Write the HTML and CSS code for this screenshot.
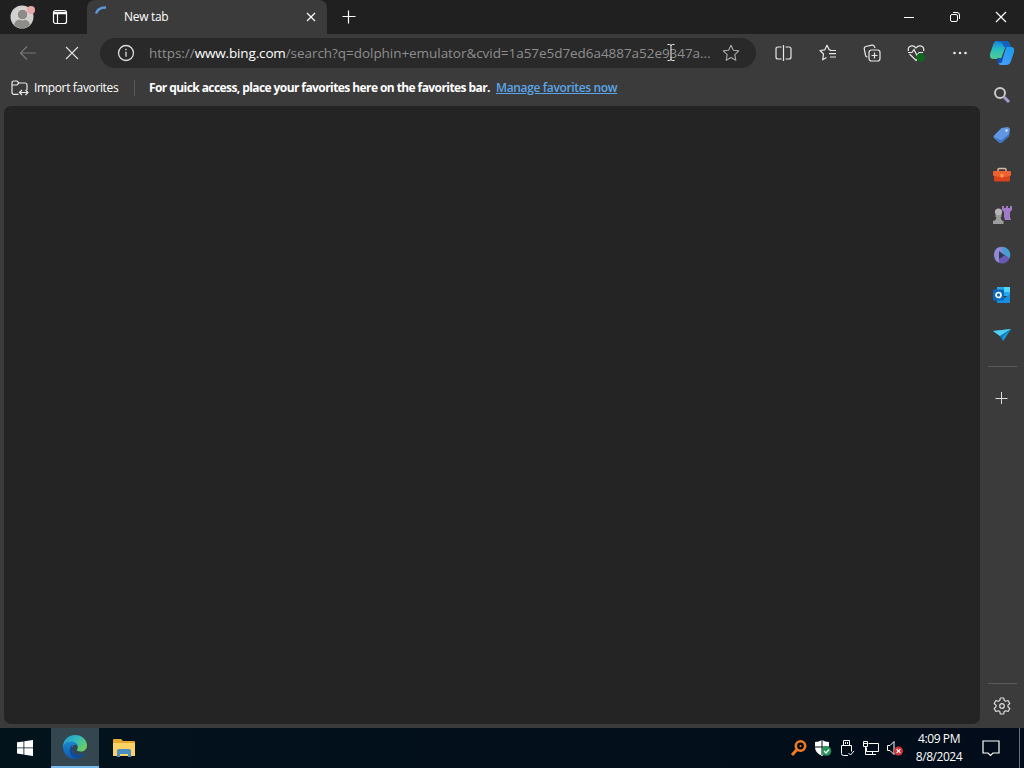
FILE: index.html
```html
<!DOCTYPE html>
<html lang="en">
<head>
  <meta charset="utf-8">
  <title>New tab</title>
  <link rel="stylesheet" href="styles.css">
</head>
<body>

  <!-- Tab strip -->
  <div class="titlebar">
    <svg class="avatar" width="28" height="28" viewBox="0 0 28 28">
      <circle cx="14" cy="14" r="11.5" fill="#d2d0ce"/>
      <path d="M6 22a8 6 0 0 1 16 0a11.5 11.5 0 0 1-16 0z" fill="#8e8c89"/>
      <circle cx="14.5" cy="11.5" r="5.4" fill="#8e8c89" stroke="#e8e6e4"/>
      <circle cx="23" cy="7" r="4" fill="#e9a8a8"/>
    </svg>
    <svg class="workspaces" width="16" height="16" viewBox="0 0 16 16" fill="none" stroke="#fff" stroke-width="1.2">
      <rect x="1.5" y="1.5" width="13" height="13" rx="2"/>
      <path d="M2 3.4h12M2 4.6h12M5.5 5v9"/>
    </svg>
    <div class="tab">
      <svg class="spinner" width="16" height="16" viewBox="0 0 16 16" fill="none">
        <path d="M2 8.500Q4 2.300 12 2.500" stroke="#5b9bdc" stroke-width="2.400"/>
      </svg>
      <span class="tab-title">New tab</span>
      <svg width="10" height="10" viewBox="0 0 10 10" stroke="#fff" stroke-width="1.2"><path d="M1 1l8 8M9 1l-8 8"/></svg>
    </div>
    <svg class="new-tab" width="14" height="14" viewBox="0 0 14 14" stroke="#fff" stroke-width="1.2"><path d="M6.500 .5v13M.5 6.500h13"/></svg>
    <div class="window-buttons">
      <svg width="12" height="12" viewBox="0 0 12 12" stroke="#fff"><path d="M1 6.5h10"/></svg>
      <svg width="12" height="12" viewBox="0 0 12 12" fill="none" stroke="#fff"><rect x="1.5" y="3.5" width="7" height="7" rx="1.5"/><path d="M4 1.5h4q2.5 0 2.5 2.5v4"/></svg>
      <svg width="12" height="12" viewBox="0 0 12 12" stroke="#fff" stroke-width="1.2"><path d="M1 1l10 10M11 1L1 11"/></svg>
    </div>
  </div>

  <div class="browser">
    <div class="main">

      <!-- Toolbar -->
      <div class="toolbar">
        <svg class="back" width="18" height="16" viewBox="0 0 18 16" fill="none" stroke="#777" stroke-width="1.2"><path d="M17 8H1.5M8 1.5L1.5 8L8 14.5"/></svg>
        <svg class="stop" width="14" height="14" viewBox="0 0 14 14" stroke="#ddd" stroke-width="1.2"><path d="M1 1l12 12M13 1L1 13"/></svg>
        <div class="address">
          <svg class="info" width="18" height="18" viewBox="0 0 18 18" fill="none" stroke="#ddd" stroke-width="1.3"><circle cx="9" cy="9" r="7.5"/><path d="M9 7.8v5M9 4.8v1.5"/></svg>
          <span class="url">https://<b>www.bing.com</b>/search?q=dolphin+emulator&amp;cvid=1a57e5d7ed6a4887a52e9347a...</span>
          <svg class="star" width="18" height="18" viewBox="0 0 18 18" fill="none" stroke="#aaa" stroke-width="1.1" stroke-linejoin="round"><path d="M9 1.2l2.4 5 5.4.7-4 3.8 1 5.5L9 13.6l-4.8 2.6 1-5.5-4-3.8 5.4-.7z"/></svg>
          <svg class="cursor" width="8" height="17" viewBox="0 0 8 17" fill="none" stroke="#eee"><path d="M.5.5h2Q4 .5 4 2Q4 .5 5.500.5h2M4 2v13M.5 16.500h2Q4 16.500 4 15Q4 16.500 5.500 16.500h2"/></svg>
        </div>
        <div class="tools">
          <svg width="18" height="18" viewBox="0 0 18 18" fill="none" stroke="#e8e8e8" stroke-width="1.2"><path d="M8.500 1v16M6.500 3H3Q1 3 1 5v8q0 2 2 2h3.500M10.500 3H14q2 0 2 2v8q0 2-2 2h-3.500"/></svg>
          <svg width="18" height="18" viewBox="0 0 18 18" fill="none" stroke="#e8e8e8" stroke-width="1.2" stroke-linejoin="round"><path d="M12 6l-1.800-.2L8 1.300 5.800 5.800 1 6.500l3.500 3.500-.8 5.800L7.500 13.500M11 6.500h6M10 9.700h7M11 13h6"/></svg>
          <svg width="18" height="18" viewBox="0 0 18 18" fill="none" stroke="#e8e8e8" stroke-width="1.200"><rect x="6" y="6" width="11" height="11" rx="2.500"/><path d="M11.500 8.500v6M8.500 11.500h6M4.500 13Q3 13 2.600 11.500L1.200 5Q1 3 2.700 2.500L9 1.200q2-.2 2.500 1.500L12 4"/></svg>
          <svg width="18" height="18" viewBox="0 0 18 18" fill="none" stroke="#e8e8e8" stroke-width="1.200"><path d="M1.500 7C0 2 6 0 9 4C12 0 18 2 16.500 7M2.500 10L9 16.500L14 11.500M1 8.500h4l2-3 3 6 2-3h4"/><circle cx="13.500" cy="13.500" r="4.200" fill="#0d681b" stroke="none"/></svg>
          <svg width="18" height="18" viewBox="0 0 18 18" fill="#e8e8e8"><circle cx="3.500" cy="9" r="1.300"/><circle cx="9" cy="9" r="1.300"/><circle cx="14.500" cy="9" r="1.300"/></svg>
        </div>
      </div>

      <!-- Favorites bar -->
      <div class="favorites">
        <svg width="18" height="16" viewBox="0 0 18 16" fill="none" stroke="#e8e8e8" stroke-width="1.200"><path d="M7.500 14.400H3q-2 0-2-2V3q0-2 2-2h3l2 2h6q2 0 2 2v5M1 5h5l2-2M9 12.500h7.500M11 10l-2.500 2.500L11 15M14.500 10l2.500 2.500-2.500 2.500"/></svg>
        <span class="import">Import favorites</span>
        <span class="divider"></span>
        <span class="hint">For quick access, place your favorites here on the favorites bar.</span>
        <a href="#" class="manage">Manage favorites now</a>
      </div>

      <div class="page"></div>
    </div>

    <!-- Sidebar -->
    <div class="sidebar">
      <svg class="copilot" width="26" height="26" viewBox="0 0 26 26">
        <defs>
          <linearGradient id="cp1" x1="0" y1="0" x2="0" y2="1"><stop offset="0" stop-color="#1682dd"/><stop offset=".5" stop-color="#29c0bd"/><stop offset="1" stop-color="#50cd8d"/></linearGradient>
          <linearGradient id="cp2" x1="1" y1="0" x2="0" y2="1"><stop offset="0" stop-color="#159ce9"/><stop offset="1" stop-color="#4d9dff"/></linearGradient>
        </defs>
        <path d="M8 1h9q3 0 4 4l1 3h-6l-4 11H5q-5 0-4-5L4 5q1-4 4-4z" fill="url(#cp1)"/>
        <path d="M8 1h9q3 0 4 4l1 3h-5q-2 0-3-3t-4-3z" fill="#1262bd"/>
        <path d="M18 7h4q4 0 3 5l-3 9q-1 4-5 4h-5q-3 0-3-4h2q2 0 3-4l2-6q1-4 2-4z" fill="url(#cp2)"/>
        <path d="M8 18h4q2-1 3-4l-2 8q-2 2-4 1-1-1-1-5z" fill="#1551ae"/>
      </svg>
      <svg width="18" height="18" viewBox="0 0 18 18" fill="none"><circle cx="7" cy="7" r="5" stroke="#c9c9c9" stroke-width="2"/><path d="M11 11l5 5" stroke="#a59bd0" stroke-width="3"/></svg>
      <svg width="18" height="18" viewBox="0 0 18 18"><path d="M1 9.500L8.500 2 15 1l2 2-1 7-7 6.500q-2 1-3.500-.5L1 12q-1-1 0-2.500z" fill="#6097e2"/><path d="M1 11l6 5.700q1.500.5 2.500-.5L16 10l.3-2L8 14.500z" fill="#3971c2"/><circle cx="13.500" cy="4.500" r="1.200" fill="#d2e3fa"/></svg>
      <svg width="20" height="18" viewBox="0 0 20 18"><path d="M6 5V3.500q0-1 1-1h6q1 0 1 1V5" fill="none" stroke="#d9b9a0" stroke-width="1.400"/><path d="M2 9h16v5q0 1.500-1.500 1.500h-13Q2 15.500 2 14z" fill="#d9431b"/><path d="M1 6q0-1 1-1h16q1 0 1 1v3.500q-9 3-18 0z" fill="#ee6030"/><path d="M8.500 8h3v2.500L10 12l-1.500-1.500z" fill="#ff9a4d"/></svg>
      <svg width="20" height="18" viewBox="0 0 20 18"><path d="M10 0h2v2h2V0h2v2h2V0h2v4l-2 2v5l1 3h-6l-1-3V6l-2-2z" fill="#a07bc8"/><circle cx="6.500" cy="6" r="3.600" fill="#b5b5b5"/><path d="M3.500 9h6v2h-1l1 3 2 1v3H1v-3l2.500-1 1-3h-1z" fill="#9c9c9c"/></svg>
      <svg width="18" height="18" viewBox="0 0 18 18">
        <path d="M9 .7A8.300 8.300 0 0 1 16.500 12.500L11 9 6 5z" fill="#459fd3"/>
        <path d="M9 .7Q2 .5 1 8q-.5 6 5 9V5l6 3.500Q8 3 9 .7z" fill="#9188d6"/>
        <path d="M6 17q7 2 10.500-4.500L12 9l-6 4z" fill="#6859b6"/>
        <path d="M6 5.500l5.500 3.500L6 12.500z" fill="#303a55"/>
      </svg>
      <svg width="18" height="18" viewBox="0 0 18 18"><path d="M4 1h12q1 0 1 1v8H4z" fill="#28a8ea"/><path d="M11 1h6v5h-6z" fill="#50d9ff"/><path d="M4 9l6 4 7-5v8q0 1-1 1H4z" fill="#1490df"/><rect y="3.500" width="11" height="11" rx="1" fill="#0a68bd"/><circle cx="5.500" cy="9" r="2.500" fill="none" stroke="#fff" stroke-width="1.700"/></svg>
      <svg width="18" height="18" viewBox="0 0 18 18"><path d="M0 5l18-2-8 12-3-5z" fill="#1ba4df"/><path d="M0 5l18-2L7 10z" fill="#54cdf2"/><path d="M7 10l11-7-8 8v4z" fill="#087eb7"/></svg>
      <div class="rule"></div>
      <svg class="add" width="14" height="14" viewBox="0 0 14 14" stroke="#ddd"><path d="M6.500 1v12M.5 7.500h12"/></svg>
      <div class="rule rule-bottom"></div>
      <svg class="gear" width="18" height="18" viewBox="0 0 18 18" fill="none" stroke="#ddd" stroke-width="1.200" stroke-linejoin="round"><path d="M7.300 1h3.400l.5 2.400 1.600.9 2.300-.8 1.700 3L15 8.100v1.800l1.800 1.600-1.700 3-2.300-.8-1.600.9-.5 2.400H7.300l-.5-2.400-1.600-.9-2.300.8-1.700-3L3 9.900V8.100L1.200 6.500l1.700-3 2.300.8 1.600-.9z"/><circle cx="9" cy="9" r="2.300"/></svg>
    </div>
  </div>

  <!-- Windows taskbar -->
  <div class="taskbar">
    <div class="task">
      <svg width="16" height="16" viewBox="0 0 16 16" fill="#fff"><path d="M0 2.300l6.500-.9v6.100H0zM7.300 1.300L16 0v7.500H7.300zM0 8.300h6.500v6.200L0 13.600zM7.300 8.300H16V16l-8.700-1.300z"/></svg>
    </div>
    <div class="task active">
      <svg width="24" height="24" viewBox="0 0 24 24">
        <defs>
          <linearGradient id="edge1" x1="0" y1="0" x2="1" y2=".6"><stop offset="0" stop-color="#2298d4"/><stop offset=".5" stop-color="#32b7c1"/><stop offset="1" stop-color="#68ce62"/></linearGradient>
          <linearGradient id="edge2" x1="0" y1="0" x2="0" y2="1"><stop offset="0" stop-color="#1b86cc"/><stop offset="1" stop-color="#1058b4"/></linearGradient>
        </defs>
        <path d="M0 12C0 5 5 0 12 0c7 0 12 5 12 10.500 0 4-3 6-6.500 6-2.500 0-4-1-3.500-2 2-3 0-6-4-6-5 0-8 2-10 3.500z" fill="url(#edge1)"/>
        <path d="M0 12c1-4 4-6 8-5.500 4 0 6 2 7 4-3-2-6 0-6 3 0 5 6 8 13 5-2 3.500-6 5.500-10 5.500C5 24 0 18 0 12z" fill="url(#edge2)"/>
        <path d="M9 10c-5 5-1 13 5 13.700 4-.7 6-2.200 8-5.200-7 3-13 0-13-5z" fill="#124b91"/>
      </svg>
    </div>
    <div class="task">
      <svg width="22" height="20" viewBox="0 0 22 20"><path d="M0 2q0-1 1-1h7l2 2h11q1 0 1 1v14H0z" fill="#e8a92f"/><path d="M0 5h22v13H0z" fill="#fbd264"/><path d="M4 19v-6q0-2 2-2h10q2 0 2 2v6h-3v-3H7v3z" fill="#4b8ec4"/></svg>
    </div>
    <div class="tray">
      <svg width="18" height="18" viewBox="0 0 18 18" fill="none" stroke="#f07b22"><circle cx="10.500" cy="7" r="4.700" stroke-width="2.600"/><circle cx="10.500" cy="7" r="1" stroke="none" fill="#f07b22"/><path d="M7 10.500L2 16" stroke-width="3"/></svg>
      <svg width="18" height="18" viewBox="0 0 18 18"><path d="M8 1q3 2 7 2v5q0 6-7 9Q1 14 1 8V3q4 0 7-2z" fill="#fff"/><path d="M8 1v15M1 8h14" stroke="#020d19"/><circle cx="12.500" cy="12" r="4.800" fill="#249458"/><path d="M10 12l2 2 3-3.500" fill="none" stroke="#fff" stroke-width="1.200"/></svg>
      <svg width="18" height="18" viewBox="0 0 18 18" fill="none" stroke="#fff"><path d="M5.500 6.500v-5h6v5M3.500 6.500h10v6M10 16.500H5.500q-2 0-2-2v-8M7.500 3v2M9.500 3v2M10.500 14l2 2 3.500-4"/></svg>
      <svg width="18" height="18" viewBox="0 0 18 18" fill="none" stroke="#fff"><path d="M6.500 4.500h10v8h-12v-4M10.500 12.500v3M7 15.500h7M1.500 2.500h4v5h-4zM3.500 7.500v8h4M2 4.500h3"/></svg>
      <svg width="18" height="18" viewBox="0 0 18 18"><path d="M1.500 6.500H4l4-4v13l-4-4H1.500z" fill="none" stroke="#fff"/><circle cx="12.500" cy="12" r="4.500" fill="#d13438"/><path d="M10.700 10.200l3.600 3.600M14.300 10.200l-3.600 3.600" stroke="#fff" stroke-width="1.200"/></svg>
    </div>
    <div class="clock">
      <div class="time">4:09 PM</div>
      <div class="date">8/8/2024</div>
    </div>
    <svg class="notifications" width="18" height="18" viewBox="0 0 18 18" fill="none" stroke="#fff" stroke-width="1.200"><path d="M1 2h16v12h-6l-2.500 2.500L6 14H1z"/></svg>
    <div class="show-desktop"></div>
  </div>

</body>
</html>
```
FILE: styles.css
```css
* {
  box-sizing: border-box;
}
body {
  margin: 0;
  width: 1024px;
  height: 768px;
  overflow: hidden;
  display: flex;
  flex-direction: column;
  font-family: "Open Sans", "Noto Sans", sans-serif;
  font-size: 12px;
  color: white;
  background: #3b3b3b;
}
svg {
  display: block;
  flex-shrink: 0;
}

/* tab strip */
.titlebar {
  height: 34px;
  display: flex;
  align-items: center;
  background: #202020;
}
.avatar {
  margin-left: 8px;
}
.workspaces {
  margin-left: 16px;
}
.tab {
  width: 240px;
  height: 34px;
  margin-left: 19px;
  padding: 0 11px 0 7px;
  display: flex;
  align-items: center;
  background: #3b3b3b;
  border-radius: 8px 8px 0 0;
}
.spinner {
  align-self: flex-start;
  margin-top: 5px;
}
.tab-title {
  flex: 1;
  margin-left: 14px;
  padding-bottom: 1px;
  letter-spacing: -0.3px;
}
.new-tab {
  margin-left: 15px;
}
.window-buttons {
  margin-left: auto;
  margin-right: 17px;
  display: flex;
  gap: 34px;
}

.browser {
  height: 694px;
  display: flex;
}
.main {
  width: 980px;
  display: flex;
  flex-direction: column;
}

/* toolbar */
.toolbar {
  height: 38px;
  display: flex;
  align-items: center;
}
.back {
  margin-left: 19px;
}
.stop {
  margin-left: 28px;
}
.address {
  position: relative;
  width: 656px;
  height: 30px;
  margin-left: 21px;
  padding: 0 16px 0 17px;
  display: flex;
  align-items: center;
  background: #292929;
  border-radius: 15px;
}
.url {
  flex: 1;
  margin-left: 14px;
  font-size: 13.5px;
  line-height: 20px;
  letter-spacing: -0.05px;
  white-space: nowrap;
  color: #8e8e8e;
}
.url b {
  font-weight: normal;
  letter-spacing: -0.15px;
  color: white;
}
.cursor {
  position: absolute;
  left: 567px;
  top: 6px;
}
.tools {
  margin-left: 19px;
  display: flex;
  gap: 26px;
}

/* favorites bar */
.favorites {
  height: 34px;
  padding: 0 0 3px 11px;
  display: flex;
  align-items: center;
  white-space: nowrap;
}
.import {
  width: 85px;
  margin-left: 5px;
  letter-spacing: -0.35px;
}
.divider {
  width: 1px;
  height: 16px;
  margin-left: 15px;
  background: #5a5a5a;
}
.hint {
  width: 341px;
  margin-left: 14px;
  font-weight: bold;
  letter-spacing: -0.58px;
}
.manage {
  margin-left: 6px;
  font-weight: 600;
  letter-spacing: -0.35px;
  color: #5ba6e8;
}

.page {
  height: 618px;
  margin-left: 4px;
  background: #242424;
  border-radius: 7px;
}

/* sidebar */
.sidebar {
  width: 44px;
  padding-top: 6px;
  display: flex;
  flex-direction: column;
  align-items: center;
  gap: 22px;
}
.copilot {
  margin-bottom: -2px;
}
.rule {
  width: 29px;
  height: 1px;
  background: #5b5b5b;
}
.add {
  margin-top: 2px;
}
.rule-bottom {
  margin-top: auto;
}
.gear {
  margin-top: -9px;
  margin-bottom: 13px;
}

/* taskbar */
.taskbar {
  height: 40px;
  display: flex;
  align-items: center;
  background: linear-gradient(90deg, #03131c, #020c1a);
}
.task {
  width: 49px;
  height: 40px;
  display: flex;
  align-items: center;
  justify-content: center;
}
.active {
  width: 48px;
  margin-left: 2px;
  background: #344650;
  border-bottom: 2px solid #76b9ed;
}
.tray {
  margin-left: auto;
  display: flex;
  gap: 6px;
}
.clock {
  width: 60px;
  margin-left: 5px;
  text-align: center;
  line-height: 18px;
}
.time {
  letter-spacing: -0.4px;
}
.date {
  letter-spacing: -0.45px;
}
.notifications {
  margin-left: 13px;
}
.show-desktop {
  width: 5px;
  height: 40px;
  margin-left: 19px;
  border-left: 1px solid #66727c;
}
```
